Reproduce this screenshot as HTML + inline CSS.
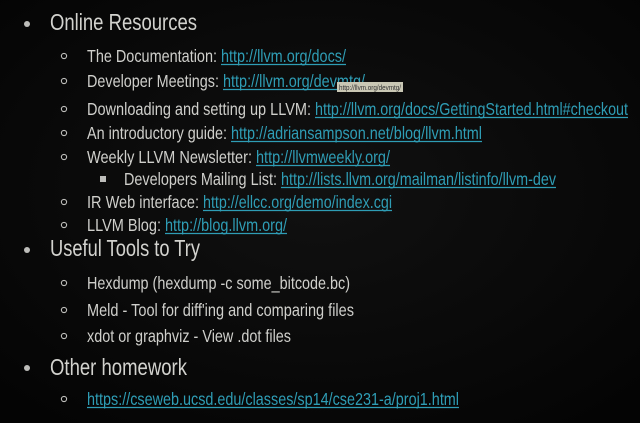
<!DOCTYPE html>
<html><head><meta charset="utf-8"><style>
html,body{margin:0;padding:0;background:#080808;}
svg{display:block}
text{font-family:"Liberation Sans",Arial,sans-serif;}
.t{fill:#cfcfcb;font-size:17.5px}
.h{fill:#d2d2ce;font-size:23px}
.l{fill:#2f9db5;font-size:17.5px}
.u{stroke:#2f9db5;stroke-width:1.2}
.b{fill:none;stroke:#bdbdba;stroke-width:1.1}
</style></head><body>
<svg width="640" height="423" viewBox="0 0 640 423" xmlns="http://www.w3.org/2000/svg">
<defs><radialGradient id="g" cx="50%" cy="45%" r="70%"><stop offset="0" stop-color="#111"/><stop offset="1" stop-color="#040404"/></radialGradient>
<filter id="bl"><feGaussianBlur stdDeviation="0.35"/></filter></defs>
<rect width="640" height="423" fill="url(#g)"/>
<g filter="url(#bl)">
<circle cx="27" cy="24" r="3" fill="#bdbdba"/>
<text class="h" x="50" y="30" textLength="147" lengthAdjust="spacingAndGlyphs">Online Resources</text>

<circle class="b" cx="64" cy="56" r="2.6"/>
<text class="t" x="87" y="62" textLength="130" lengthAdjust="spacingAndGlyphs">The Documentation:</text>
<text class="l" x="221" y="62" textLength="125" lengthAdjust="spacingAndGlyphs">http://llvm.org/docs/</text>
<line class="u" x1="221" y1="64.5" x2="346" y2="64.5"/>

<circle class="b" cx="64" cy="81" r="2.6"/>
<text class="t" x="87" y="87" textLength="132" lengthAdjust="spacingAndGlyphs">Developer Meetings:</text>
<text class="l" x="223" y="87" textLength="142" lengthAdjust="spacingAndGlyphs">http://llvm.org/devmtg/</text>
<line class="u" x1="223" y1="89.5" x2="365" y2="89.5"/>
<rect x="337" y="82" width="66" height="10" fill="#c9c7b4"/>
<text x="339" y="90" font-size="7" fill="#333" textLength="62" lengthAdjust="spacingAndGlyphs">http://llvm.org/devmtg/</text>

<circle class="b" cx="64" cy="109" r="2.6"/>
<text class="t" x="87" y="115" textLength="224" lengthAdjust="spacingAndGlyphs">Downloading and setting up LLVM:</text>
<text class="l" x="315" y="115" textLength="313" lengthAdjust="spacingAndGlyphs">http://llvm.org/docs/GettingStarted.html#checkout</text>
<line class="u" x1="315" y1="117.5" x2="628" y2="117.5"/>

<circle class="b" cx="64" cy="133" r="2.6"/>
<text class="t" x="87" y="139" textLength="140" lengthAdjust="spacingAndGlyphs">An introductory guide:</text>
<text class="l" x="231" y="139" textLength="251" lengthAdjust="spacingAndGlyphs">http://adriansampson.net/blog/llvm.html</text>
<line class="u" x1="231" y1="141.5" x2="482" y2="141.5"/>

<circle class="b" cx="64" cy="157" r="2.6"/>
<text class="t" x="87" y="163" textLength="165" lengthAdjust="spacingAndGlyphs">Weekly LLVM Newsletter:</text>
<text class="l" x="256" y="163" textLength="134" lengthAdjust="spacingAndGlyphs">http://llvmweekly.org/</text>
<line class="u" x1="256" y1="165.5" x2="390" y2="165.5"/>

<rect x="100" y="176" width="6" height="6" fill="#bdbdba"/>
<text class="t" x="124" y="185" textLength="153" lengthAdjust="spacingAndGlyphs">Developers Mailing List:</text>
<text class="l" x="281" y="185" textLength="275" lengthAdjust="spacingAndGlyphs">http://lists.llvm.org/mailman/listinfo/llvm-dev</text>
<line class="u" x1="281" y1="187.5" x2="556" y2="187.5"/>

<circle class="b" cx="64" cy="202" r="2.6"/>
<text class="t" x="87" y="208" textLength="112" lengthAdjust="spacingAndGlyphs">IR Web interface:</text>
<text class="l" x="203" y="208" textLength="189" lengthAdjust="spacingAndGlyphs">http://ellcc.org/demo/index.cgi</text>
<line class="u" x1="203" y1="210.5" x2="392" y2="210.5"/>

<circle class="b" cx="64" cy="225" r="2.6"/>
<text class="t" x="87" y="231" textLength="74" lengthAdjust="spacingAndGlyphs">LLVM Blog:</text>
<text class="l" x="165" y="231" textLength="122" lengthAdjust="spacingAndGlyphs">http://blog.llvm.org/</text>
<line class="u" x1="165" y1="233.5" x2="287" y2="233.5"/>

<circle cx="27" cy="250" r="3" fill="#bdbdba"/>
<text class="h" x="50" y="256" textLength="150" lengthAdjust="spacingAndGlyphs">Useful Tools to Try</text>

<circle class="b" cx="64" cy="283" r="2.6"/>
<text class="t" x="87" y="289" textLength="263" lengthAdjust="spacingAndGlyphs">Hexdump (hexdump -c some_bitcode.bc)</text>
<circle class="b" cx="64" cy="310" r="2.6"/>
<text class="t" x="87" y="316" textLength="267" lengthAdjust="spacingAndGlyphs">Meld - Tool for diff'ing and comparing files</text>
<circle class="b" cx="64" cy="336" r="2.6"/>
<text class="t" x="87" y="342" textLength="204" lengthAdjust="spacingAndGlyphs">xdot or graphviz - View .dot files</text>

<circle cx="27" cy="368" r="3" fill="#bdbdba"/>
<text class="h" x="50" y="375" textLength="137" lengthAdjust="spacingAndGlyphs">Other homework</text>

<circle class="b" cx="64" cy="399" r="2.6"/>
<text class="l" x="87" y="405" textLength="372" lengthAdjust="spacingAndGlyphs">https://cseweb.ucsd.edu/classes/sp14/cse231-a/proj1.html</text>
<line class="u" x1="87" y1="407.5" x2="459" y2="407.5"/>
</g>
</svg>
</body></html>
